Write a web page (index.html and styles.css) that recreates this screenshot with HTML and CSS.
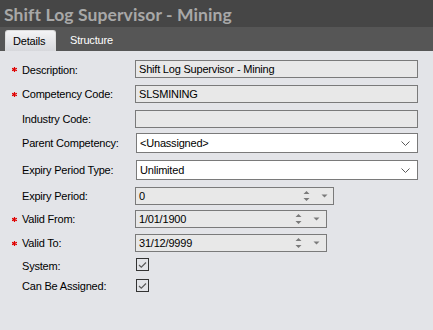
FILE: index.html
```html
<!DOCTYPE html>
<html>
<head>
<meta charset="utf-8">
<link rel="stylesheet" href="styles.css">
</head>
<body>
<div class="window">
  <header class="titlebar">Shift Log Supervisor - Mining</header>
  <nav class="tabs">
    <div class="tab active">Details</div>
    <div class="tab">Structure</div>
  </nav>
  <main class="content">
    <div class="row first">
      <span class="req"><svg width="5" height="5" viewBox="0 0 5 5"><path d="M2.5 0V5M0 1.2L5 3.8M0 3.8L5 1.2" stroke="#e00000" stroke-width="1.2"/></svg></span>
      <label class="lbl lbl-low">Description:</label>
      <div class="field text disabled">Shift Log Supervisor - Mining</div>
    </div>
    <div class="row">
      <span class="req"><svg width="5" height="5" viewBox="0 0 5 5"><path d="M2.5 0V5M0 1.2L5 3.8M0 3.8L5 1.2" stroke="#e00000" stroke-width="1.2"/></svg></span>
      <label class="lbl">Competency Code:</label>
      <div class="field text disabled">SLSMINING</div>
    </div>
    <div class="row">
      <span class="req"></span>
      <label class="lbl">Industry Code:</label>
      <div class="field text disabled"></div>
    </div>
    <div class="row tight">
      <span class="req"></span>
      <label class="lbl">Parent Competency:</label>
      <div class="field combo"><span>&lt;Unassigned&gt;</span>
        <svg class="chev" width="9" height="5" viewBox="0 0 9 5"><path d="M0.5 0.5L4.5 4.5L8.5 0.5" fill="none" stroke="#5a5a5a" stroke-width="1"/></svg>
      </div>
    </div>
    <div class="row">
      <span class="req"></span>
      <label class="lbl">Expiry Period Type:</label>
      <div class="field combo"><span>Unlimited</span>
        <svg class="chev" width="9" height="5" viewBox="0 0 9 5"><path d="M0.5 0.5L4.5 4.5L8.5 0.5" fill="none" stroke="#5a5a5a" stroke-width="1"/></svg>
      </div>
    </div>
    <div class="row">
      <span class="req"></span>
      <label class="lbl">Expiry Period:</label>
      <div class="field spin period disabled"><span>0</span>
        <span class="arrows">
          <svg width="7" height="12" viewBox="0 0 7 12"><path d="M0.5 4L3.5 1L6.5 4Z M0.5 8L3.5 11L6.5 8Z" fill="#7a7a7a"/></svg>
          <svg width="7" height="4" viewBox="0 0 7 4"><path d="M0.5 0.5L3.5 3.5L6.5 0.5Z" fill="#7a7a7a"/></svg>
        </span>
      </div>
    </div>
    <div class="row tight">
      <span class="req"><svg width="5" height="5" viewBox="0 0 5 5"><path d="M2.5 0V5M0 1.2L5 3.8M0 3.8L5 1.2" stroke="#e00000" stroke-width="1.2"/></svg></span>
      <label class="lbl">Valid From:</label>
      <div class="field spin date disabled"><span>1/01/1900</span>
        <span class="arrows">
          <svg width="7" height="12" viewBox="0 0 7 12"><path d="M0.5 4L3.5 1L6.5 4Z M0.5 8L3.5 11L6.5 8Z" fill="#7a7a7a"/></svg>
          <svg width="7" height="4" viewBox="0 0 7 4"><path d="M0.5 0.5L3.5 3.5L6.5 0.5Z" fill="#7a7a7a"/></svg>
        </span>
      </div>
    </div>
    <div class="row mid">
      <span class="req"><svg width="5" height="5" viewBox="0 0 5 5"><path d="M2.5 0V5M0 1.2L5 3.8M0 3.8L5 1.2" stroke="#e00000" stroke-width="1.2"/></svg></span>
      <label class="lbl">Valid To:</label>
      <div class="field spin date disabled"><span>31/12/9999</span>
        <span class="arrows">
          <svg width="7" height="12" viewBox="0 0 7 12"><path d="M0.5 4L3.5 1L6.5 4Z M0.5 8L3.5 11L6.5 8Z" fill="#7a7a7a"/></svg>
          <svg width="7" height="4" viewBox="0 0 7 4"><path d="M0.5 0.5L3.5 3.5L6.5 0.5Z" fill="#7a7a7a"/></svg>
        </span>
      </div>
    </div>
    <div class="row mid">
      <span class="req"></span>
      <label class="lbl lbl-low">System:</label>
      <div class="check"><svg width="11" height="11" viewBox="0 0 11 11"><path d="M2 6L4.3 8.2L9 3.5" fill="none" stroke="#5a5a5a" stroke-width="1.2"/></svg></div>
    </div>
    <div class="row loose">
      <span class="req"></span>
      <label class="lbl">Can Be Assigned:</label>
      <div class="check"><svg width="11" height="11" viewBox="0 0 11 11"><path d="M2 6L4.3 8.2L9 3.5" fill="none" stroke="#5a5a5a" stroke-width="1.2"/></svg></div>
    </div>
  </main>
</div>
</body>
</html>
```
FILE: styles.css
```css
* { box-sizing: border-box; }
html, body { margin: 0; padding: 0; }
body {
  width: 433px;
  height: 330px;
  overflow: hidden;
  background: #e3e4e8;
  font-family: "Liberation Sans", Arial, sans-serif;
  font-size: 11px;
  letter-spacing: -0.2px;
  color: #000;
}
.window { display: flex; flex-direction: column; height: 330px; }
.titlebar {
  height: 27px;
  background: #464646;
  color: #a8a8a8;
  font-family: Lato, "Open Sans", sans-serif;
  font-weight: bold;
  font-size: 17.5px;
  line-height: 29px;
  padding-left: 4px;
  letter-spacing: 0.1px;
}
.tabs {
  height: 24px;
  background: #565656;
  display: flex;
  align-items: flex-end;
  padding-left: 5px;
}
.tab {
  height: 21px;
  line-height: 20px;
  color: #fff;
  padding: 0 8px;
  font-size: 11px;
}
.tab.active {
  width: 51px;
  color: #000;
  background: linear-gradient(#f4f4f5, #d7d8dc);
  border: 1px solid #dcdcdc;
  border-bottom: none;
  border-radius: 3px 3px 0 0;
  padding-left: 7px;
  margin-right: 6px;
}
.content {
  flex: 1;
  padding: 9px 0 0 12px;
  display: flex;
  flex-direction: column;
}
.row { display: flex; align-items: center; margin-top: 7px; }
.row.first { margin-top: 0; }
.row.tight { margin-top: 5px; }
.row.mid { margin-top: 6px; }
.row.loose { margin-top: 8px; }
.req { width: 10px; height: 5px; display: flex; align-items: center; }
.req svg { display: block; }
.lbl { width: 113px; color: #000; }
.lbl-low { position: relative; top: 1px; }
.field {
  height: 18px;
  border: 1px solid #7a7a7a;
  display: flex;
  align-items: center;
  padding-left: 3px;
  white-space: nowrap;
}
.field.disabled { background: #e8e8e8; }
.field.text { width: 283px; }
.field.combo {
  width: 282px;
  height: 20px;
  margin-left: 1px;
  background: #fff;
  justify-content: space-between;
  padding-right: 7px;
}
.chev { display: block; }
.field.spin { justify-content: space-between; }
.field.period { width: 199px; padding-right: 5px; }
.field.date { width: 192px; padding-right: 6px; }
.arrows { display: flex; align-items: center; gap: 11px; }
.arrows svg { display: block; }
.check {
  width: 13px;
  height: 13px;
  border: 1px solid #333;
  margin-left: 1px;
  display: flex;
  align-items: center;
  justify-content: center;
}
.check svg { display: block; }
```
